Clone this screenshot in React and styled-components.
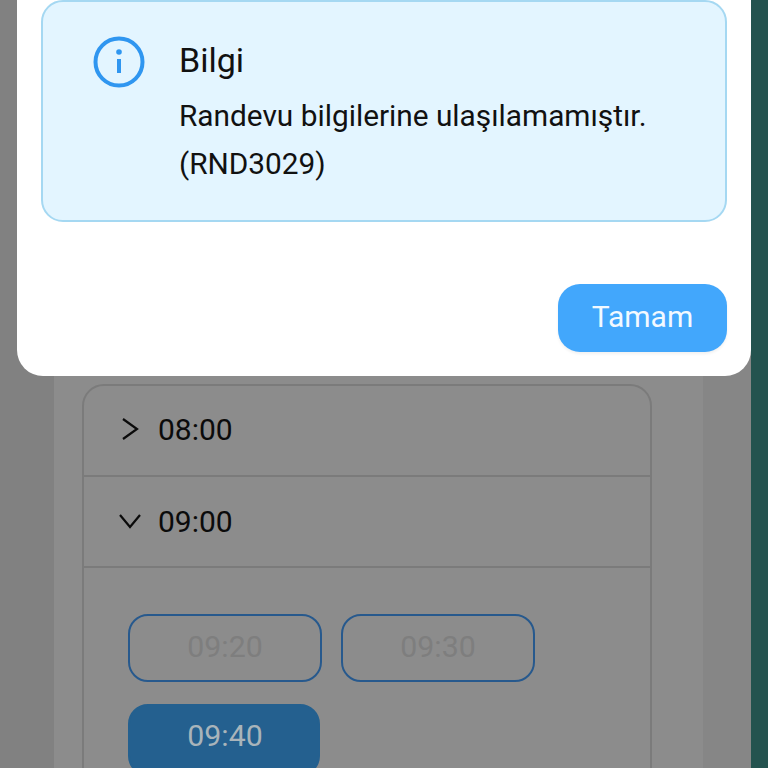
import React from "react"
import styled, { createGlobalStyle } from "styled-components"

const slots = [
    { time: "09:20", selected: false },
    { time: "09:30", selected: false },
    { time: "09:40", selected: true },
]

export default function App() {
    return (
        <Page>
            <GlobalStyle />
            <SideGutter />
            <MainCard>
                <Accordion>
                    <HourRow>
                        <ChevronBox>
                            <svg width="20" height="24" viewBox="0 0 20 24" fill="none" stroke="#0b0b0b" strokeWidth="2.2">
                                <path d="M3 2 L17 12 L3 22" />
                            </svg>
                        </ChevronBox>
                        <HourLabel>08:00</HourLabel>
                    </HourRow>
                    <HourRow $open>
                        <ChevronBox>
                            <svg width="22" height="16" viewBox="0 0 22 16" fill="none" stroke="#0b0b0b" strokeWidth="2.2">
                                <path d="M1 2 L11 14 L21 2" />
                            </svg>
                        </ChevronBox>
                        <HourLabel>09:00</HourLabel>
                    </HourRow>
                    <SlotGrid>
                        {slots.map((slot) => (
                            <Slot key={slot.time} $selected={slot.selected}>{slot.time}</Slot>
                        ))}
                    </SlotGrid>
                </Accordion>
            </MainCard>
            <RightGutter />
            <EdgeStrip />
            <Dialog>
                <AlertBox>
                    <InfoIcon width="52" height="52" viewBox="0 0 52 52" fill="none">
                        <circle cx="26" cy="26" r="23.5" stroke="#2f96f0" strokeWidth="4" />
                        <circle cx="26" cy="16" r="2.8" fill="#2f96f0" />
                        <path d="M26 23 V37" stroke="#2f96f0" strokeWidth="4" />
                    </InfoIcon>
                    <AlertText>
                        <AlertTitle>Bilgi</AlertTitle>
                        <AlertMessage>Randevu bilgilerine ulaşılamamıştır. (RND3029)</AlertMessage>
                    </AlertText>
                </AlertBox>
                <DialogActions>
                    <OkButton>Tamam</OkButton>
                </DialogActions>
            </Dialog>
        </Page>
    )
}

const GlobalStyle = createGlobalStyle`
html, body {
    margin: 0;
    padding: 0;
    width: 768px;
    height: 768px;
    overflow: hidden;
    font-family: Roboto, "Liberation Sans", sans-serif;
}
`
const Page = styled.div`
position: relative;
display: grid;
grid-template-columns: 54px 649px 48px 17px;
width: 768px;
height: 768px;
overflow: hidden;
background-color: #858585;
`
const SideGutter = styled.div`
background-color: #818181;
`
const RightGutter = styled.div`
background-color: #868686;
`
const EdgeStrip = styled.div`
background-color: #24534f;
`
const MainCard = styled.div`
box-sizing: border-box;
height: 768px;
padding: 384px 51px 0 28px;
background-color: #8c8c8c;
overflow: hidden;
`
const Accordion = styled.div`
box-sizing: border-box;
width: 570px;
height: 500px;
border: 2px solid #7b7b7b;
border-radius: 22px 22px 0 0;
`
const HourRow = styled.div`
display: flex;
align-items: center;
box-sizing: border-box;
height: 91px;
padding-left: 30px;
padding-bottom: ${(props) => (props.$open ? "1px" : "3px")};
border-bottom: 2px solid #7b7b7b;
`
const ChevronBox = styled.div`
display: flex;
justify-content: center;
align-items: center;
width: 32px;
margin-right: 12px;
`
const HourLabel = styled.span`
font-size: 30px;
color: #0b0b0b;
`
const SlotGrid = styled.div`
display: grid;
grid-template-columns: 194px 194px;
grid-auto-rows: 68px;
column-gap: 19px;
row-gap: 22px;
padding: 46px 0 0 44px;
`
const Slot = styled.div`
display: flex;
justify-content: center;
align-items: center;
box-sizing: border-box;
width: ${(props) => (props.$selected ? "192px" : "194px")};
height: ${(props) => (props.$selected ? "72px" : "68px")};
padding-bottom: ${(props) => (props.$selected ? "9px" : "4px")};
padding-left: ${(props) => (props.$selected ? "2px" : "0")};
border: 2px solid ${(props) => (props.$selected ? "#24608f" : "#27598d")};
border-radius: 20px;
font-size: 30.3px;
color: ${(props) => (props.$selected ? "#a9b4ba" : "#7e7e7e")};
background-color: ${(props) => (props.$selected ? "#24608f" : "transparent")};
`
const Dialog = styled.div`
position: absolute;
top: -24px;
left: 17px;
box-sizing: border-box;
width: 734px;
height: 400px;
padding: 24px 24px 24px;
background-color: #ffffff;
border-radius: 0 0 26px 26px;
display: flex;
flex-direction: column;
justify-content: space-between;
`
const AlertBox = styled.div`
display: flex;
align-items: flex-start;
gap: 34px;
box-sizing: border-box;
width: 686px;
height: 222px;
padding: 36px 0 0 50px;
background-color: #e3f5ff;
border: 2px solid #a5d8f2;
border-radius: 22px;
`
const InfoIcon = styled.svg`
margin-top: -2px;
flex-shrink: 0;
`
const AlertText = styled.div`
display: flex;
flex-direction: column;
width: 490px;
`
const AlertTitle = styled.div`
font-size: 34px;
line-height: 44px;
color: #111111;
`
const AlertMessage = styled.div`
margin-top: 10px;
font-size: 29.8px;
line-height: 48px;
color: #111111;
`
const DialogActions = styled.div`
display: flex;
justify-content: flex-end;
`
const OkButton = styled.div`
display: flex;
justify-content: center;
align-items: center;
width: 169px;
height: 68px;
padding-bottom: 3px;
box-sizing: border-box;
border-radius: 22px;
font-size: 30px;
color: #f2f9ff;
background-color: #42a7fc;
box-shadow: 0 2px 3px rgba(0, 0, 0, 0.06);
`
